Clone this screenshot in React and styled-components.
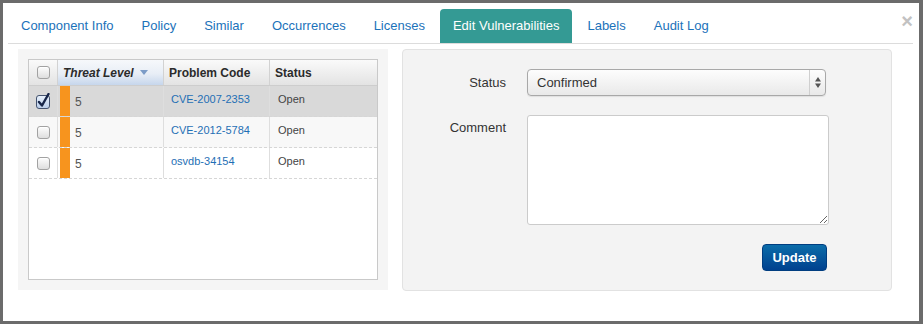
import React from 'react';
import styled, { createGlobalStyle } from 'styled-components';

const GlobalStyle = createGlobalStyle`
  html, body {
    margin: 0;
    padding: 0;
    background: #6b6b6b;
    font-family: 'Liberation Sans', Arial, Helvetica, sans-serif;
  }
  * {
    box-sizing: border-box;
  }
`;

const Modal = styled.div`
  position: relative;
  margin: 3px 4px 3px 3px;
  height: 318px;
  background: #fff;
  padding: 3px 6px 0 5px;
`;

const CloseButton = styled.span`
  position: absolute;
  top: 8px;
  right: 6px;
  font-size: 20px;
  font-weight: bold;
  line-height: 20px;
  color: #c2c2c2;
  cursor: pointer;
`;

const TabList = styled.ul`
  display: flex;
  margin: 0;
  padding: 0;
  list-style: none;
  height: 38px;
  padding-top: 3px;
  border-bottom: 1px solid #dcdcdc;
`;

const Tab = styled.li`
  display: flex;
  align-items: center;
  height: 34px;
  margin-right: 2px;
  padding: 0 13px 1px;
  font-size: 13px;
  color: ${(p) => (p.$active ? '#fff' : '#1b72ba')};
  background: ${(p) => (p.$active ? '#349a94' : 'transparent')};
  border-radius: 4px 4px 0 0;
  white-space: nowrap;
`;

const Content = styled.div`
  display: flex;
  align-items: flex-start;
  gap: 14px;
  margin-top: 5px;
  padding-left: 10px;
`;

const GridPanel = styled.div`
  width: 370px;
  height: 241px;
  padding: 10px;
  background: #f5f5f5;
`;

const Grid = styled.div`
  height: 221px;
  border: 1px solid #c9c9c9;
  background: #fff;
`;

const columns = '29px 106px 106px 1fr';

const HeaderRow = styled.div`
  display: grid;
  grid-template-columns: ${columns};
  height: 26px;
  border-bottom: 1px solid #cdcdcd;
  background: linear-gradient(#fafafa, #e3e3e3);
`;

const HeaderCell = styled.div`
  display: flex;
  align-items: center;
  gap: 6px;
  padding-left: ${(p) => (p.$center ? 0 : '5px')};
  justify-content: ${(p) => (p.$center ? 'center' : 'flex-start')};
  border-right: 1px solid #d2d2d2;
  font-size: 12px;
  font-weight: bold;
  font-style: ${(p) => (p.$sorted ? 'italic' : 'normal')};
  color: #2b2b2b;
  background: ${(p) =>
    p.$sorted ? 'linear-gradient(#f6f8fb 0%, #e8eef6 55%, #c6d6ec 100%)' : 'none'};

  &:last-child {
    border-right: none;
  }
`;

const Row = styled.div`
  display: grid;
  grid-template-columns: ${columns};
  height: 31px;
  border-bottom: 1px dashed #d6d6d6;
  background: ${(p) => p.$bg};
`;

const Cell = styled.div`
  display: flex;
  align-items: ${(p) => (p.$center ? 'center' : 'flex-start')};
  justify-content: ${(p) => (p.$center ? 'center' : 'flex-start')};
  padding: ${(p) => (p.$center ? '0' : `7px 0 0 ${p.$indent || 7}px`)};
  border-right: 1px solid #dedede;
  font-size: 11px;
  line-height: 13px;
  color: #444;

  &:last-child {
    border-right: none;
  }
`;

const LevelCell = styled.div`
  display: flex;
  align-items: stretch;
  border-right: 1px solid #dedede;
  font-size: 12px;
  color: #555;
`;

const LevelBar = styled.span`
  width: 10px;
  margin: 0 5px 0 2px;
  background: #f7941e;
`;

const LevelValue = styled.span`
  padding-top: 9px;
`;

const CodeLink = styled.a`
  color: #1f6fb5;
  text-decoration: none;
`;

const Check = styled.span`
  display: inline-block;
  width: 13px;
  height: 13px;
  border: 1px solid #a2a2a2;
  border-radius: 3px;
  background: linear-gradient(#fdfdfd, #dedede);
  box-shadow: inset 0 1px 0 #fff;
`;

const FormPanel = styled.div`
  width: 490px;
  height: 242px;
  padding-top: 19px;
  background: #f3f3f3;
  border: 1px solid #e2e2e2;
  border-radius: 4px;
  display: grid;
  grid-template-columns: 103px 302px;
  column-gap: 21px;
  row-gap: 19px;
  align-content: start;
`;

const Label = styled.label`
  text-align: right;
  font-size: 13px;
  color: #333;
  line-height: ${(p) => (p.$tall ? '18px' : '27px')};
  padding-top: ${(p) => (p.$tall ? '4px' : '0')};
`;

const SelectBox = styled.div`
  display: flex;
  align-items: stretch;
  width: 299px;
  height: 27px;
  border: 1px solid #a8a8a8;
  border-radius: 4px;
  background: linear-gradient(#fdfdfd, #e9e9e9);
  box-shadow: 0 1px 1px rgba(0, 0, 0, 0.08);
  font-size: 13px;
  color: #333;
`;

const SelectText = styled.span`
  flex: 1;
  padding-left: 9px;
  line-height: 25px;
`;

const SelectArrows = styled.span`
  display: flex;
  align-items: center;
  justify-content: center;
  width: 16px;
  border-left: 1px solid #cfcfcf;
`;

const CommentArea = styled.textarea`
  width: 302px;
  height: 110px;
  border: 1px solid #cbcbcb;
  border-radius: 3px;
  background: #fff;
  resize: both;
  font-family: inherit;
  font-size: 13px;
  outline: none;
`;

const Actions = styled.div`
  grid-column: 2;
  display: flex;
  justify-content: flex-end;
  width: 300px;
`;

const UpdateButton = styled.button`
  width: 65px;
  height: 27px;
  border: 1px solid #003d80;
  border-radius: 4px;
  background: linear-gradient(#0b6ca9, #00418f);
  color: #fff;
  font-family: inherit;
  font-size: 13px;
  font-weight: bold;
  padding: 0;
  cursor: pointer;
`;

const SortArrow = () => (
  <svg width='8' height='5' viewBox='0 0 8 5'>
    <path d='M0 0 H8 L4 5 Z' fill='#7c9cc7' />
  </svg>
);

const CheckedBox = () => (
  <svg width='15' height='16' viewBox='0 0 15 16'>
    <defs>
      <linearGradient id='cbg' x1='0' y1='0' x2='0' y2='1'>
        <stop offset='0' stopColor='#eaf2fc' />
        <stop offset='1' stopColor='#b9cdea' />
      </linearGradient>
    </defs>
    <rect x='0.5' y='2.5' width='13' height='13' rx='2.5' fill='url(#cbg)' stroke='#44536f' />
    <path d='M3 9 L6 12.5 L12.5 1' fill='none' stroke='#17264a' strokeWidth='2.4' strokeLinecap='round' strokeLinejoin='round' />
  </svg>
);

const UpDown = () => (
  <svg width='6' height='11' viewBox='0 0 6 11'>
    <path d='M0 4.5 L3 0 L6 4.5 Z M0 6.5 L3 11 L6 6.5 Z' fill='#555' />
  </svg>
);

const tabs = [
  'Component Info',
  'Policy',
  'Similar',
  'Occurrences',
  'Licenses',
  'Edit Vulnerabilities',
  'Labels',
  'Audit Log',
];

const vulnerabilities = [
  { level: 5, code: 'CVE-2007-2353', status: 'Open', checked: true, bg: '#d9d9d9' },
  { level: 5, code: 'CVE-2012-5784', status: 'Open', bg: '#f8f8f8' },
  { level: 5, code: 'osvdb-34154', status: 'Open', bg: '#fff' },
];

const App = () => (
  <>
    <GlobalStyle />
    <Modal>
      <CloseButton>×</CloseButton>
      <TabList>
        {tabs.map((t) => (
          <Tab key={t} $active={t === 'Edit Vulnerabilities'}>
            {t}
          </Tab>
        ))}
      </TabList>
      <Content>
        <GridPanel>
          <Grid>
            <HeaderRow>
              <HeaderCell $center>
                <Check />
              </HeaderCell>
              <HeaderCell $sorted>
                Threat Level <SortArrow />
              </HeaderCell>
              <HeaderCell>Problem Code</HeaderCell>
              <HeaderCell>Status</HeaderCell>
            </HeaderRow>
            {vulnerabilities.map((v) => (
              <Row key={v.code} $bg={v.bg}>
                <Cell $center>{v.checked ? <CheckedBox /> : <Check />}</Cell>
                <LevelCell>
                  <LevelBar />
                  <LevelValue>{v.level}</LevelValue>
                </LevelCell>
                <Cell>
                  <CodeLink href='#'>{v.code}</CodeLink>
                </Cell>
                <Cell $indent={8}>{v.status}</Cell>
              </Row>
            ))}
          </Grid>
        </GridPanel>
        <FormPanel>
          <Label>Status</Label>
          <SelectBox>
            <SelectText>Confirmed</SelectText>
            <SelectArrows>
              <UpDown />
            </SelectArrows>
          </SelectBox>
          <Label $tall>Comment</Label>
          <CommentArea />
          <Actions>
            <UpdateButton>Update</UpdateButton>
          </Actions>
        </FormPanel>
      </Content>
    </Modal>
  </>
);

export default App;
